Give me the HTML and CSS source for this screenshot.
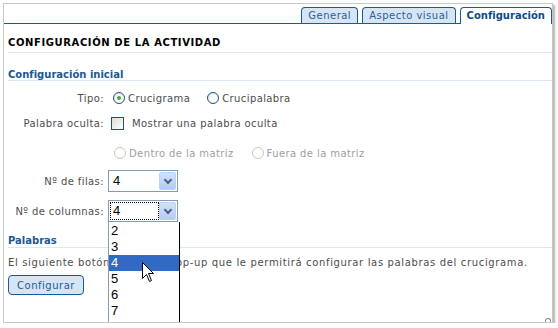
FILE: index.html
```html
<!DOCTYPE html>
<html lang="es">
<head>
  <meta charset="UTF-8" />
  <title>Configuración de la actividad</title>
  <link rel="stylesheet" href="styles.css">
</head>
<body>
  <div class="window">
    <div class="tabs">
      <span class="tab">General</span>
      <span class="tab">Aspecto visual</span>
      <span class="tab active">Configuración</span>
    </div>

    <h1 class="title">CONFIGURACIÓN DE LA ACTIVIDAD</h1>

    <h2 class="section">Configuración inicial</h2>
    <div class="form">
      <div class="row row-tipo">
        <span class="label">Tipo:</span>
        <span class="opt"><span class="radio checked"></span>Crucigrama</span>
        <span class="opt"><span class="radio"></span>Crucipalabra</span>
      </div>
      <div class="row row-oculta">
        <span class="label">Palabra oculta:</span>
        <span class="opt"><span class="check"></span>Mostrar una palabra oculta</span>
      </div>
      <div class="row row-pos">
        <span class="label"></span>
        <span class="opt disabled"><span class="radio"></span>Dentro de la matriz</span>
        <span class="opt disabled"><span class="radio"></span>Fuera de la matriz</span>
      </div>
      <div class="row row-select">
        <span class="label">Nº de filas:</span>
        <div class="select">
          <span class="value">4</span>
          <span class="arrow"></span>
        </div>
      </div>
      <div class="row row-select">
        <span class="label">Nº de columnas:</span>
        <div class="select">
          <span class="value focus">4</span>
          <span class="arrow"></span>
          <ul class="dropdown">
            <li>2</li>
            <li>3</li>
            <li class="hover">4</li>
            <li>5</li>
            <li>6</li>
            <li>7</li>
            <li>8</li>
          </ul>
          <svg class="cursor" width="13" height="21" viewBox="0 0 13 21">
            <path d="M0.5 0.5 L0.5 16.5 L4.5 12.5 L7.5 19.5 L9.5 18.5 L6.5 11.5 L11.5 11.5 Z" fill="#fff" stroke="#000" stroke-width="1"/>
          </svg>
        </div>
      </div>
    </div>

    <h2 class="section section-words">Palabras</h2>
    <p class="text">El siguiente botón abrirá un pop-up que le permitirá configurar las palabras del crucigrama.</p>
    <button class="btn">Configurar</button>
    <span class="grip"></span>
  </div>
</body>
</html>
```

FILE: styles.css
```css
* {
  box-sizing: border-box;
}
body {
  margin: 0;
  background: #fff;
  font-family: "DejaVu Sans", Verdana, sans-serif;
  font-size: 10px;
  color: #4d4d4d;
}
.window {
  position: relative;
  margin: 3px 0 0 3px;
  width: 550px;
  height: 320px;
  border: 1px solid #c8c8c8;
  box-shadow: 2px 2px 2px #b4b4b4;
  overflow: hidden;
  padding-top: 3px;
}

/* tabs */
.tabs {
  display: flex;
  justify-content: flex-end;
  gap: 4px;
  height: 17px;
  border-bottom: 1px solid #1d5a94;
}
.tab {
  height: 16px;
  padding: 0 6px;
  border: 1px solid #1d5a94;
  border-bottom: none;
  border-radius: 4px 4px 0 0;
  background: #d5e5f6;
  color: #2d5e93;
  line-height: 15px;
  letter-spacing: 0.5px;
}
.tab.active {
  height: 17px;
  background: #fff;
  color: #0b4b8b;
  font-weight: bold;
  letter-spacing: 0;
}

/* headings */
.title {
  margin: 0 0 0 4px;
  padding: 13px 0 4px 0;
  height: 29px;
  font-size: 10px;
  color: #000;
  letter-spacing: 0.6px;
  border-bottom: 1px solid #d9e8f5;
}
.section {
  margin: 0 0 0 4px;
  padding-top: 16px;
  height: 28px;
  font-size: 10px;
  line-height: 11px;
  color: #1a5894;
  border-bottom: 1px solid #d9e8f5;
}

/* form rows */
.form {
  padding-left: 4px;
}
.row {
  display: flex;
  align-items: center;
  letter-spacing: 0.4px;
}
.label {
  width: 96px;
  text-align: right;
  flex-shrink: 0;
}
.row-tipo {
  margin-top: 8px;
  height: 18px;
}
.row-oculta {
  margin-top: 7px;
  height: 18px;
}
.row-pos {
  margin-top: 12px;
  height: 18px;
}
.row-select {
  margin-top: 8px;
  height: 22px;
}
.opt {
  display: flex;
  align-items: center;
  margin-right: 8px;
}
.opt.disabled {
  color: #a0a0a0;
}
.radio {
  width: 12px;
  height: 12px;
  margin: 0 3px 0 9px;
  border: 1px solid #1d5181;
  border-radius: 50%;
  background: radial-gradient(circle at 60% 60%, #fff 30%, #dcdcd6 100%);
  position: relative;
}
.radio.checked::after {
  content: "";
  position: absolute;
  left: 3px;
  top: 3px;
  width: 4px;
  height: 4px;
  border-radius: 50%;
  background: #3cb23c;
}
.opt.disabled .radio {
  border-color: #cac8bb;
  background: #fff;
  margin-left: 10px;
}
.check {
  width: 13px;
  height: 13px;
  margin: 0 8px 0 7px;
  border: 1px solid #1d5181;
  background: linear-gradient(135deg, #dcdcd7, #fff);
}

/* select */
.select {
  position: relative;
  margin-left: 4px;
  width: 70px;
  height: 22px;
  border: 1px solid #7f9db9;
  background: #fff;
  font-family: "Liberation Sans", Arial, sans-serif;
  font-size: 13px;
  color: #000;
  letter-spacing: 0;
}
.value {
  position: absolute;
  left: 1px;
  top: 1px;
  width: 49px;
  height: 18px;
  padding-left: 3px;
  line-height: 18px;
}
.value.focus {
  outline: 1px dotted #000;
  outline-offset: -1px;
}
.arrow {
  position: absolute;
  right: 1px;
  top: 1px;
  width: 17px;
  height: 18px;
  border: 1px solid #bcd0f8;
  border-radius: 2px;
  background: linear-gradient(#d3e1fd, #b4caf6);
}
.arrow::after {
  content: "";
  position: absolute;
  left: 5px;
  top: 4px;
  width: 4px;
  height: 4px;
  border-right: 2px solid #4d6185;
  border-bottom: 2px solid #4d6185;
  transform: rotate(45deg);
}
.dropdown {
  position: absolute;
  left: -1px;
  top: 21px;
  z-index: 5;
  width: 72px;
  height: 110px;
  margin: 0;
  padding: 0;
  list-style: none;
  background: #fff;
  border-left: 1px solid #7f9db9;
  border-right: 1px solid #000;
}
.dropdown li {
  height: 16px;
  line-height: 16px;
  padding-left: 2px;
}
.dropdown li:first-child {
  margin-top: 1px;
}
.dropdown li.hover {
  background: #316ac5;
  color: #fff;
}
.cursor {
  position: absolute;
  left: 33px;
  top: 61px;
  z-index: 6;
}

/* words */
.section-words {
  padding-top: 13px;
  height: 26px;
}
.text {
  margin: 9px 0 0 4px;
  white-space: nowrap;
  letter-spacing: 0.65px;
}
.btn {
  margin: 7px 0 0 4px;
  width: 76px;
  height: 20px;
  padding: 0;
  border: 1px solid #1d5a94;
  border-radius: 4px;
  background: #d5e5f6;
  color: #1d5a94;
  font-family: "DejaVu Sans", Verdana, sans-serif;
  font-size: 10px;
  letter-spacing: 0.5px;
}
.grip {
  position: absolute;
  right: 1px;
  bottom: 0;
  width: 6px;
  height: 4px;
  border: 1px solid #8a8a8a;
  border-bottom: none;
  border-radius: 3px 3px 0 0;
}
```
